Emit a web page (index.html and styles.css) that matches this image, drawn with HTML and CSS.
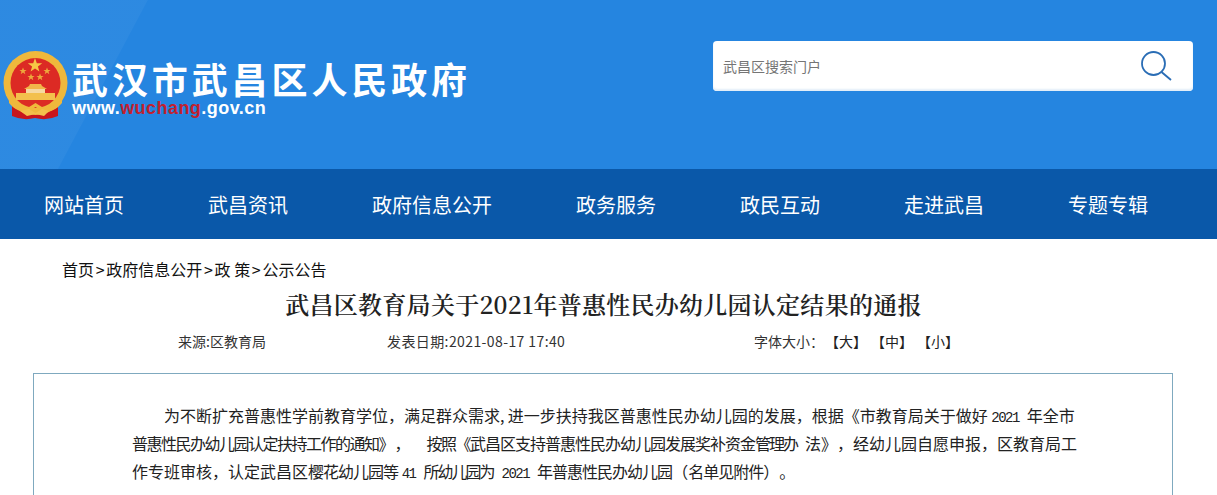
FILE: index.html
```html
<!DOCTYPE html>
<html lang="zh-CN">
<head>
    <meta charset="UTF-8">
    <title>武昌区教育局关于2021年普惠性民办幼儿园认定结果的通报</title>
    <link rel="stylesheet" href="styles.css">
</head>
<body>
    <header class="top">
        <div class="logo">
            <svg class="emblem" width="66" height="70" viewBox="0 0 66 70">
                <path d="M9 46 L9 65 Q20 70 32 67 Q44 70 55 65 L55 46 Z" fill="#c8161d"/>
                <circle cx="32.5" cy="32" r="32" fill="#efb83c"/>
                <circle cx="32.5" cy="32" r="25" fill="#dc2a24"/>
                <polygon points="32,7 33.8,12.2 39.2,12.2 34.9,15.4 36.4,20.6 32,17.4 27.6,20.6 29.1,15.4 24.8,12.2 30.2,12.2" fill="#f6c945"/>
                <polygon points="20,16.5 21,19 23.6,19 21.5,20.6 22.3,23.2 20,21.6 17.7,23.2 18.5,20.6 16.4,19 19,19" fill="#eea83c"/>
                <polygon points="44,16.5 45,19 47.6,19 45.5,20.6 46.3,23.2 44,21.6 41.7,23.2 42.5,20.6 40.4,19 43,19" fill="#eea83c"/>
                <polygon points="28,22.5 29,25 31.6,25 29.5,26.6 30.3,29.2 28,27.6 25.7,29.2 26.5,26.6 24.4,25 27,25" fill="#eea83c"/>
                <polygon points="37,22.5 38,25 40.6,25 38.5,26.6 39.3,29.2 37,27.6 34.7,29.2 35.5,26.6 33.4,25 36,25" fill="#eea83c"/>
                <path d="M27 33 L38 33 L39 35 L44 38 L21 38 L26 35 Z" fill="#f1b64a"/>
                <rect x="23" y="38" width="19" height="4" fill="#f6d9a0"/>
                <rect x="13" y="42" width="39" height="7" fill="#f3c04c"/>
                <path d="M6 46 Q14 58 26 56 L32.5 52 L39 56 Q51 58 59 46 L59 52 Q50 63 39 60 L32.5 56 L26 60 Q15 63 6 52 Z" fill="#efb83c"/>
                <path d="M17 60 L26 58 L32.5 62 L39 58 L46 60 L41 65 L32.5 63 L24 65 Z" fill="#f3c04c"/>
            </svg>
            <div class="logo-text">
                <div class="site-name">武汉市武昌区人民政府</div>
                <div class="site-url">www.<span class="url-red">wuchang</span>.gov.cn</div>
            </div>
        </div>
        <div class="search">
            <span class="search-hint">武昌区搜索门户</span>
            <svg width="32" height="32" viewBox="0 0 32 32" fill="none" stroke="#2a6db5" stroke-width="1.8">
                <circle cx="12.5" cy="13.5" r="11.5"/>
                <path d="M20.5 22 L30 30"/>
            </svg>
        </div>
    </header>

    <nav class="nav">
        <a>网站首页</a>
        <a>武昌资讯</a>
        <a>政府信息公开</a>
        <a>政务服务</a>
        <a>政民互动</a>
        <a>走进武昌</a>
        <a>专题专辑</a>
    </nav>

    <div class="crumb">首页<span class="sep">&gt;</span>政府信息公开<span class="sep">&gt;</span>政 策<span class="sep">&gt;</span>公示公告</div>
    <h1 class="title">武昌区教育局关于2021年普惠性民办幼儿园认定结果的通报</h1>
    <div class="meta">
        <span class="source">来源:区教育局</span>
        <span class="date">发表日期:2021-08-17 17:40</span>
        <span class="size">字体大小：</span>
        <span class="size-opt">【大】</span>
        <span class="size-opt">【中】</span>
        <span class="size-opt">【小】</span>
    </div>

    <div class="article">
        <p class="lead">为不断扩充普惠性学前教育学位，满足群众需求,&thinsp;进一步扶持我区普惠性民办幼儿园的发展，根据《市教育局关于做好 <span class="num">2021</span>&ensp;年全市</p>
        <p><span class="t15">普惠性民办幼儿园认定扶持工作的通知</span>》，&emsp;<span class="t15">按照《</span><span class="t1">武昌区支持普惠性民办幼儿园发展奖补资金</span><span class="t2">管理办</span>&ensp;法》，经幼儿园自愿申报，区教育局工</p>
        <p>作专班审核，认定武昌区<span class="t1">樱花幼儿园等</span> <span class="num">41</span>&ensp;<span class="t2">所幼儿园为</span>&ensp;<span class="num">2021</span>&ensp;<span class="t1">年普惠性民办幼儿园</span>（<span class="t1">名单见附件</span>）。</p>
    </div>
</body>
</html>
```
FILE: styles.css
```css
html, body {
    height: 495px;
    overflow: hidden;
}
body {
    margin: 0;
    background: #fff;
    color: #222;
    font-family: "Liberation Sans", "Noto Sans CJK SC", sans-serif;
}
.top {
    height: 169px;
    box-sizing: border-box;
    padding: 41px 24px 0 3px;
    display: flex;
    justify-content: space-between;
    align-items: flex-start;
    background:
        linear-gradient(118deg, rgba(255,255,255,0.04) 0, rgba(255,255,255,0.04) 130px, transparent 131px),
        #2585e0;
}
.logo {
    display: flex;
    gap: 3px;
    margin-top: 10px;
}
.emblem {
    display: block;
}
.logo-text {
    color: #fff;
    margin-top: 8px;
}
.site-name {
    font-family: "Noto Sans CJK SC", sans-serif;
    font-weight: 700;
    font-size: 36px;
    line-height: 38px;
    letter-spacing: 3.9px;
    white-space: nowrap;
}
.site-url {
    font-weight: 700;
    font-size: 18px;
    line-height: 20px;
    margin-top: 1px;
    letter-spacing: 0.45px;
}
.url-red {
    color: #c2202e;
}
.search {
    width: 480px;
    height: 50px;
    box-sizing: border-box;
    padding: 0 20px 0 10px;
    background: #fff;
    border-radius: 4px;
    box-shadow: inset 0 -2px 2px #e3eef8;
    display: flex;
    align-items: center;
    justify-content: space-between;
}
.search-hint {
    font-family: "Noto Sans CJK SC", sans-serif;
    font-size: 14px;
    color: #757575;
}
.nav {
    height: 70px;
    padding-left: 44px;
    display: flex;
    align-items: center;
    gap: 84px;
    background: #0a58a9;
    color: #fff;
    font-family: "Noto Sans CJK SC", sans-serif;
    font-size: 20px;
}
.crumb {
    margin: 19px 0 0 62px;
    font-family: "Noto Sans CJK SC", sans-serif;
    font-size: 16px;
    line-height: 22px;
    color: #111;
}
.sep {
    padding: 0 1.7px;
}
.title {
    margin: 9px 0 0;
    padding-right: 10px;
    text-align: center;
    font-family: "Noto Serif CJK SC", "Noto Sans CJK SC", serif;
    font-size: 24px;
    line-height: 30px;
    font-weight: 600;
    letter-spacing: 0.27px;
    color: #222;
}
.meta {
    margin-top: 11px;
    padding-left: 178px;
    display: flex;
    font-family: "Noto Sans CJK SC", sans-serif;
    font-size: 14px;
    line-height: 22px;
    color: #333;
}
.source {
    width: 209px;
}
.date {
    width: 367px;
    letter-spacing: 0.4px;
}
.size {
    width: 71px;
}
.size-opt {
    margin-right: 4px;
    color: #222;
}
.article {
    margin: 21px 0 0 33px;
    width: 1138px;
    height: 400px;
    border: 1px solid #7fa9bf;
    padding-top: 27px;
}
.article p {
    margin: 0 0 0 98px;
    height: 28px;
    font-family: "Noto Sans CJK SC", sans-serif;
    font-size: 16px;
    line-height: 28px;
    color: #222;
    white-space: nowrap;
    text-spacing-trim: space-all;
}
.article .lead {
    text-indent: 32px;
}
.t1 {
    letter-spacing: -1px;
}
.t15 {
    letter-spacing: -1.5px;
}
.t2 {
    letter-spacing: -2px;
}
.num {
    font-family: "Liberation Mono", monospace;
    font-size: 14px;
    letter-spacing: -1.5px;
}
```
